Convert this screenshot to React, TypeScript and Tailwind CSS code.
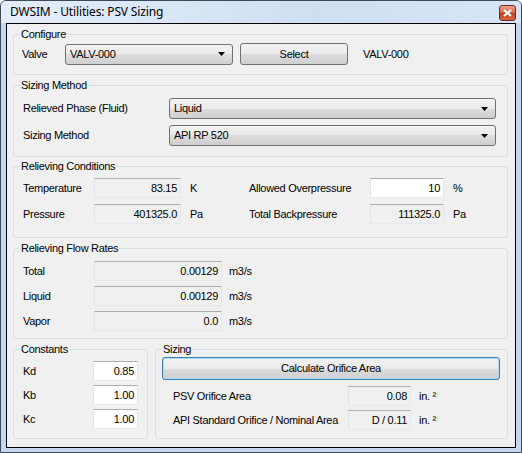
import React from 'react'

const font = { fontFamily: '"Liberation Sans", Arial, sans-serif' }

function Arrow() {
  return (
    <svg width="7" height="4" viewBox="0 0 7 4" className="shrink-0">
      <polygon points="0,0 7,0 3.5,4" fill="#000" />
    </svg>
  )
}

function Combo({ value, w }: { value: string; w: string }) {
  return (
    <div
      className={`${w} h-[21px] rounded-[3px] border border-[#707070] bg-[linear-gradient(#f2f2f2,#ebebeb_50%,#dddddd_50%,#cfcfcf)] flex items-center pl-[4px] pr-[7px] shrink-0`}
    >
      <span className="flex-1 text-[11px] text-black">{value}</span>
      <Arrow />
    </div>
  )
}

function Box({ value, w, edit }: { value: string; w: string; edit?: boolean }) {
  return (
    <div
      className={`${w} h-[20px] border border-[#e3e9ef] border-t-[#abadb3] border-l-[#e2e3ea] ${
        edit ? 'bg-white' : 'bg-[#f0f0f0]'
      } flex items-center justify-end pr-[3px] text-[11px] text-black shrink-0`}
    >
      {value}
    </div>
  )
}

function Group({ title, className, children }: { title: string; className: string; children: React.ReactNode }) {
  return (
    <fieldset className={`border border-[#d5dfe5] rounded-[3px] shrink-0 ${className}`}>
      <legend className="ml-[6px] px-[1px] text-[11px] leading-[13px] text-black">{title}</legend>
      {children}
    </fieldset>
  )
}

export default function App() {
  return (
    <div style={font} className="w-[522px] h-[453px] bg-[#c4d7ef] border border-[#3e4a5a] rounded-t-[6px] flex flex-col">
      {/* Title bar */}
      <div className="h-[22px] flex items-center justify-between pl-[9px] pr-[5px] bg-[linear-gradient(90deg,#e4eef9,#cfdff2_60%,#d6e5f6)] rounded-t-[5px]">
        <span className="text-[12px] tracking-[-0.15px] text-black" style={{ fontFamily: '"Noto Sans", "Liberation Sans", sans-serif' }}>
          DWSIM - Utilities: PSV Sizing
        </span>
        <div className="w-[17px] h-[16px] mt-[2px] rounded-[3px] border border-[#6b2a20] bg-[linear-gradient(#e9a48f,#d5694a_45%,#c2401f_55%,#d5673f)] flex items-center justify-center">
          <svg width="9" height="8" viewBox="0 0 9 8">
            <path d="M1 1 L8 7 M8 1 L1 7" stroke="#fff" strokeWidth="2.2" />
          </svg>
        </div>
      </div>

      {/* Client area */}
      <div className="flex-1 mx-[5px] mb-[4px] border border-black bg-[#f0f0f0] flex flex-col pl-[6px] text-[11px] tracking-[-0.3px] whitespace-nowrap text-black">
        {/* Configure */}
        <Group title="Configure" className="w-[495px] h-[47px] mt-[4px]">
          <div className="flex items-center pl-[8px] mt-[2px]">
            <span className="w-[43px]">Valve</span>
            <Combo value="VALV-000" w="w-[168px]" />
            <div className="ml-[7px] w-[108px] h-[22px] rounded-[3px] border border-[#707070] bg-[linear-gradient(#f2f2f2,#ebebeb_50%,#dddddd_50%,#cfcfcf)] flex items-center justify-center">
              Select
            </div>
            <span className="ml-[15px]">VALV-000</span>
          </div>
        </Group>

        {/* Sizing Method */}
        <Group title="Sizing Method" className="w-[495px] h-[78px] mt-[4px]">
          <div className="flex flex-col gap-[6px] pl-[9px] mt-[6px]">
            <div className="flex items-center">
              <span className="w-[146px]">Relieved Phase (Fluid)</span>
              <Combo value="Liquid" w="w-[327px]" />
            </div>
            <div className="flex items-center">
              <span className="w-[146px]">Sizing Method</span>
              <Combo value="API RP 520" w="w-[327px]" />
            </div>
          </div>
        </Group>

        {/* Relieving Conditions */}
        <Group title="Relieving Conditions" className="w-[495px] h-[78px] mt-[3px]">
          <div className="flex flex-col gap-[6px] pl-[9px] mt-[5px]">
            <div className="flex items-center">
              <span className="w-[71px]">Temperature</span>
              <Box value="83.15" w="w-[87px]" />
              <span className="ml-[9px] w-[59px]">K</span>
              <span className="w-[121px]">Allowed Overpressure</span>
              <Box value="10" w="w-[74px]" edit />
              <span className="ml-[9px]">%</span>
            </div>
            <div className="flex items-center">
              <span className="w-[71px]">Pressure</span>
              <Box value="401325.0" w="w-[87px]" />
              <span className="ml-[9px] w-[59px]">Pa</span>
              <span className="w-[121px]">Total Backpressure</span>
              <Box value="111325.0" w="w-[74px]" />
              <span className="ml-[9px]">Pa</span>
            </div>
          </div>
        </Group>

        {/* Relieving Flow Rates */}
        <Group title="Relieving Flow Rates" className="w-[495px] h-[97px] mt-[4px]">
          <div className="flex flex-col gap-[5px] pl-[9px] mt-[6px]">
            {[
              ['Total', '0.00129'],
              ['Liquid', '0.00129'],
              ['Vapor', '0.0'],
            ].map(([l, v]) => (
              <div key={l} className="flex items-center">
                <span className="w-[71px]">{l}</span>
                <Box value={v} w="w-[128px]" />
                <span className="ml-[7px]">m3/s</span>
              </div>
            ))}
          </div>
        </Group>

        {/* Bottom row */}
        <div className="flex gap-[7px] mt-[4px]">
          <Group title="Constants" className="w-[135px] h-[96px]">
            <div className="flex flex-col gap-[4px] pl-[9px] mt-[5px]">
              {[
                ['Kd', '0.85'],
                ['Kb', '1.00'],
                ['Kc', '1.00'],
              ].map(([l, v]) => (
                <div key={l} className="flex items-center">
                  <span className="w-[70px]">{l}</span>
                  <Box value={v} w="w-[45px]" edit />
                </div>
              ))}
            </div>
          </Group>

          <Group title="Sizing" className="w-[353px] h-[96px]">
            <div className="flex flex-col pl-[6px] mt-[1px]">
              <div className="w-[338px] h-[23px] rounded-[3px] border border-[#3c7fb1] shadow-[inset_0_0_0_1px_#a8dcf7] bg-[linear-gradient(#f2f2f2,#ebebeb_50%,#dddddd_50%,#cfcfcf)] flex items-center justify-center">
                Calculate Orifice Area
              </div>
              <div className="flex items-center mt-[6px] pl-[11px]">
                <span className="w-[175px]">PSV Orifice Area</span>
                <Box value="0.08" w="w-[63px]" />
                <span className="ml-[8px]">in. ²</span>
              </div>
              <div className="flex items-center mt-[4px] pl-[11px]">
                <span className="w-[175px]">API Standard Orifice / Nominal Area</span>
                <Box value="D / 0.11" w="w-[63px]" />
                <span className="ml-[8px]">in. ²</span>
              </div>
            </div>
          </Group>
        </div>
      </div>
    </div>
  )
}
